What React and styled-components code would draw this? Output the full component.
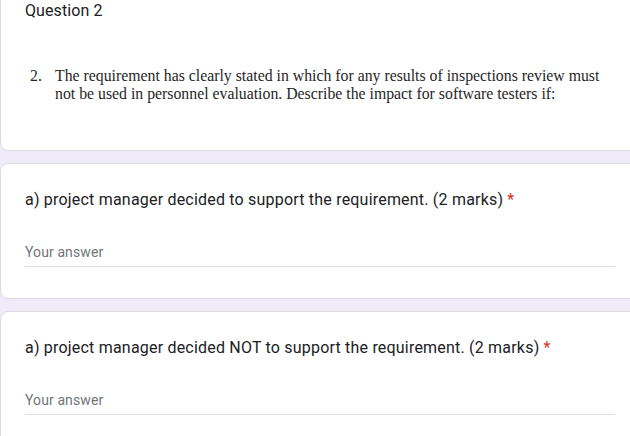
import React from 'react'
import { styled, createGlobalStyle } from 'styled-components'

const GlobalStyle = createGlobalStyle`
  html, body {
    margin: 0;
    padding: 0;
    background: #f0ebf8;
    overflow: hidden;
  }
  body {
    font-family: Roboto, "Liberation Sans", Arial, sans-serif;
    color: #202124;
  }
`

const Page = styled.div`
  width: 640px;
  margin-top: -14px;
  display: flex;
  flex-direction: column;
  gap: 12px;
`

const Card = styled.div`
  background: #fff;
  border: 1px solid #dadce0;
  border-radius: 8px;
  padding: ${(p) => p.$pad || '24px 24px 31px 24px'};
`

const SectionTitle = styled.div`
  font-size: 16px;
  line-height: 24px;
  letter-spacing: 0.1px;
`

const Body = styled.ol`
  margin: 44px 0 0 0;
  padding: 0 0 0 5px;
  list-style: none;
  font-family: "Liberation Serif", "Times New Roman", serif;
  font-size: 15.8px;
  line-height: 18px;
  color: #262626;
  li {
    display: flex;
  }
`

const Num = styled.span`
  width: 25px;
  flex: none;
`

const Title = styled.div`
  font-size: 16px;
  line-height: 24px;
  letter-spacing: 0.2px;
  color: #202124;
`

const Req = styled.span`
  color: #d93025;
  margin-left: 4px;
`

const Answer = styled.div`
  margin-top: 30px;
  font-size: 14px;
  line-height: 20px;
  letter-spacing: 0.1px;
  color: #70757a;
  padding-bottom: 4px;
  border-bottom: 1px solid #dadce0;
`

const questions = [
  'a) project manager decided to support the requirement. (2 marks)',
  'a) project manager decided NOT to support the requirement. (2 marks)',
]

const App = () => {
  return (
    <>
      <GlobalStyle />
      <Page>
        <Card $pad="12px 24px 47px 24px">
          <SectionTitle>Question 2</SectionTitle>
          <Body>
            <li>
              <Num>2.</Num>
              <span>
                The requirement has clearly stated in which for any results of inspections review must
                not be used in personnel evaluation. Describe the impact for software testers if:
              </span>
            </li>
          </Body>
        </Card>
        {questions.map((q) => (
          <Card key={q}>
            <Title>
              {q}
              <Req>*</Req>
            </Title>
            <Answer>Your answer</Answer>
          </Card>
        ))}
      </Page>
    </>
  )
}

export default App
